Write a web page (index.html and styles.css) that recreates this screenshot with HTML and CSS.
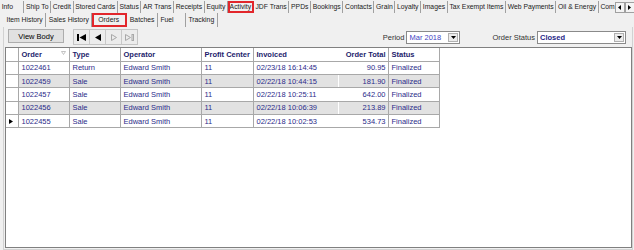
FILE: index.html
```html
<!DOCTYPE html>
<html lang="en">
<head>
  <meta charset="UTF-8" />
  <title>Customer Activity - Orders</title>
  <link rel="stylesheet" href="styles.css">
</head>
<body>
  <div class="tabs tabs-main">
    <div class="tab-list">
      <span class="tab tab-info">Info</span>
      <span class="tab">Ship To</span>
      <span class="tab">Credit</span>
      <span class="tab">Stored Cards</span>
      <span class="tab">Status</span>
      <span class="tab">AR Trans</span>
      <span class="tab">Receipts</span>
      <span class="tab">Equity</span>
      <span class="tab tab-marked">Activity</span>
      <span class="tab">JDF Trans</span>
      <span class="tab">PPDs</span>
      <span class="tab">Bookings</span>
      <span class="tab">Contacts</span>
      <span class="tab">Grain</span>
      <span class="tab">Loyalty</span>
      <span class="tab">Images</span>
      <span class="tab">Tax Exempt Items</span>
      <span class="tab">Web Payments</span>
      <span class="tab">Oil &amp; Energy</span>
      <span class="tab tab-last">Com</span>
    </div>
    <div class="tab-scroll">
      <span class="scroll-btn"><svg width="3" height="5" viewBox="0 0 3 5"><path d="M3 0 L0 2.5 L3 5Z" fill="#000"/></svg></span>
      <span class="scroll-btn"><svg width="3" height="5" viewBox="0 0 3 5"><path d="M0 0 L3 2.5 L0 5Z" fill="#000"/></svg></span>
    </div>
  </div>

  <div class="tabs tabs-sub">
    <span class="tab">Item History</span>
    <span class="tab">Sales History</span>
    <span class="tab tab-marked">Orders</span>
    <span class="tab">Batches</span>
    <span class="tab">Fuel</span>
    <span class="tab">Tracking</span>
  </div>

  <div class="page">
    <div class="toolbar">
      <button class="btn">View Body</button>

      <div class="nav">
        <span class="nav-btn">
          <svg width="9" height="7" viewBox="0 0 9 7"><rect x="0" y="0" width="2" height="7" fill="#000"/><path d="M9 0 L2.5 3.5 L9 7Z" fill="#000"/></svg>
        </span>
        <span class="nav-btn">
          <svg width="6" height="7" viewBox="0 0 6 7"><path d="M6 0 L0 3.5 L6 7Z" fill="#000"/></svg>
        </span>
        <span class="nav-btn">
          <svg width="6" height="7" viewBox="0 0 6 7"><path d="M0.5 0.5 L5.5 3.5 L0.5 6.5Z" fill="none" stroke="#a8a8a8"/></svg>
        </span>
        <span class="nav-btn">
          <svg width="9" height="7" viewBox="0 0 9 7"><path d="M0.5 0.5 L5.5 3.5 L0.5 6.5Z" fill="none" stroke="#a8a8a8"/><rect x="7" y="0.5" width="1.5" height="6" fill="none" stroke="#a8a8a8"/></svg>
        </span>
      </div>

      <div class="filters">
        <label class="filter-label">Period</label>
        <div class="combo combo-period">
          <span class="combo-value">Mar 2018</span>
          <span class="combo-arrow"><svg width="5" height="3" viewBox="0 0 5 3"><path d="M0 0 L5 0 L2.5 3Z" fill="#000"/></svg></span>
        </div>
        <label class="filter-label filter-status">Order Status</label>
        <div class="combo combo-status">
          <span class="combo-value combo-bold">Closed</span>
          <span class="combo-arrow"><svg width="5" height="3" viewBox="0 0 5 3"><path d="M0 0 L5 0 L2.5 3Z" fill="#000"/></svg></span>
        </div>
      </div>
    </div>

    <div class="grid-area">
      <table class="grid">
        <colgroup>
          <col class="c-rowhead">
          <col class="c-order">
          <col class="c-type">
          <col class="c-operator">
          <col class="c-profit">
          <col class="c-invoiced">
          <col class="c-total">
          <col class="c-status">
        </colgroup>
        <thead>
          <tr>
            <th class="rowhead"></th>
            <th class="sortable">Order
              <svg class="sort-glyph" width="5" height="4" viewBox="0 0 5 4"><path d="M0.5 0.5 L4.5 0.5 L2.5 3.5Z" fill="none" stroke="#b4b4b4" stroke-width="0.8"/></svg>
            </th>
            <th>Type</th>
            <th>Operator</th>
            <th>Profit Center</th>
            <th class="no-split">Invoiced</th>
            <th class="num">Order Total</th>
            <th>Status</th>
          </tr>
        </thead>
        <tbody>
          <tr>
            <td class="rowhead"></td>
            <td>1022461</td><td>Return</td><td>Edward Smith</td><td>11</td>
            <td class="no-split">02/23/18 16:14:45</td><td class="num">90.95</td><td>Finalized</td>
          </tr>
          <tr class="alt">
            <td class="rowhead"></td>
            <td>1022459</td><td>Sale</td><td>Edward Smith</td><td>11</td>
            <td class="no-split">02/22/18 10:44:15</td><td class="num">181.90</td><td>Finalized</td>
          </tr>
          <tr>
            <td class="rowhead"></td>
            <td>1022457</td><td>Sale</td><td>Edward Smith</td><td>11</td>
            <td class="no-split">02/22/18 10:25:11</td><td class="num">642.00</td><td>Finalized</td>
          </tr>
          <tr class="alt">
            <td class="rowhead"></td>
            <td>1022456</td><td>Sale</td><td>Edward Smith</td><td>11</td>
            <td class="no-split">02/22/18 10:06:39</td><td class="num">213.89</td><td>Finalized</td>
          </tr>
          <tr>
            <td class="rowhead"><svg width="4" height="5" viewBox="0 0 4 5"><path d="M0 0 L4 2.5 L0 5Z" fill="#000"/></svg></td>
            <td>1022455</td><td>Sale</td><td>Edward Smith</td><td>11</td>
            <td class="no-split">02/22/18 10:02:53</td><td class="num">534.73</td><td>Finalized</td>
          </tr>
        </tbody>
      </table>
    </div>
  </div>
</body>
</html>
```

FILE: styles.css
```css
body {
  margin: 0;
  width: 634px;
  height: 250px;
  overflow: hidden;
  background-color: #f0f0f0;
  font-family: "Liberation Sans", Arial, sans-serif;
  color: #000;
}

/* tab strips */
.tabs {
  display: flex;
  font-size: 6.8px;
}

.tabs-main {
  height: 13px;
  padding-top: 1px;
  box-sizing: border-box;
}

.tab-list {
  display: flex;
  flex: 1;
}

.tab {
  padding: 0 1.65px;
  border-right: 1px solid #a0a0a0;
  line-height: 12px;
  white-space: nowrap;
  color: #1a1a1a;
}

.tab-info {
  min-width: 20px;
}

.tab-last {
  padding-right: 0;
  border-right: none;
}

.tab-marked {
  outline: 2px solid #e2262b;
  outline-offset: -2px;
}

.tab-scroll {
  display: flex;
  padding-top: 1px;
}

.scroll-btn {
  width: 8px;
  height: 9px;
  border: 1px solid #a0a0a0;
  background-color: #f4f4f4;
  display: flex;
  align-items: center;
  justify-content: center;
}

.tabs-sub {
  height: 14px;
  padding-left: 4px;
}

.tabs-sub .tab {
  padding: 0 2.5px;
  min-width: 22px;
  line-height: 14px;
}

.tabs-sub .tab-marked {
  padding: 0 6px;
}

/* tab page */
.page {
  margin: 0 1px 0 3px;
  height: 222px;
  border: 1px solid #d2d2d2;
  border-top: none;
  display: flex;
  flex-direction: column;
}

.toolbar {
  height: 20px;
  display: flex;
  align-items: flex-start;
  padding: 2px 6px 0 4px;
  box-sizing: border-box;
  font-size: 7.5px;
}

.btn {
  width: 56px;
  height: 14px;
  padding: 0;
  border: 1px solid #adadad;
  background-color: #e1e1e1;
  font-family: inherit;
  font-size: 7.5px;
  color: #000;
}

.nav {
  display: flex;
  margin-left: 9px;
  height: 14px;
  border: 1px solid #c4c4c4;
  background-color: #ececec;
}

.nav-btn {
  width: 15px;
  display: flex;
  align-items: center;
  justify-content: center;
  border-right: 1px solid #c8c8c8;
}

.nav-btn:last-child {
  border-right: none;
}

.filters {
  margin-left: auto;
  display: flex;
  align-items: center;
  margin-top: 2px;
  height: 13px;
}

.filter-label {
  color: #333;
  margin-right: 2px;
}

.filter-status {
  margin-left: 32px;
}

.combo {
  height: 13px;
  box-sizing: border-box;
  border: 1px solid #8a8a8a;
  background-color: #fff;
  display: flex;
  align-items: center;
}

.combo-period {
  width: 54px;
}

.combo-status {
  width: 89px;
}

.combo-value {
  flex: 1;
  padding-left: 2px;
  color: #4343c4;
}

.combo-bold {
  font-weight: bold;
  color: #1e1e86;
}

.combo-arrow {
  width: 10px;
  height: 9px;
  margin-right: 1px;
  border: 1px solid #b0b0b0;
  background-color: #ececec;
  display: flex;
  align-items: center;
  justify-content: center;
  box-sizing: border-box;
}

/* data grid */
.grid-area {
  flex: 1;
  margin: 0 0 1px 1px;
  border: 1px solid #808080;
  background-color: #fff;
}

.grid {
  border-collapse: collapse;
  table-layout: fixed;
  width: 433px;
  font-size: 7.5px;
  color: #2b2b8a;
}

.c-rowhead { width: 12px; }
.c-order { width: 51px; }
.c-type { width: 51px; }
.c-operator { width: 81px; }
.c-profit { width: 52px; }
.c-invoiced { width: 85px; }
.c-total { width: 50px; }
.c-status { width: 51px; }

.grid th,
.grid td {
  height: 13.4px;
  padding: 0 0 0 3px;
  border-right: 1px solid #a8a8a8;
  border-bottom: 1px solid #a8a8a8;
  text-align: left;
  white-space: nowrap;
  overflow: hidden;
  box-sizing: border-box;
}

.grid th {
  height: 13px;
  font-weight: bold;
  color: #1c1c6c;
  background-color: #fff;
}

.grid .no-split {
  border-right-color: transparent;
}

.grid .num {
  text-align: right;
  padding: 0 2px 0 0;
}

.grid .rowhead {
  padding: 0 0 0 3px;
  background-color: #fff;
}

.grid tr.alt td {
  background-color: #e2e2e2;
}

.grid tr.alt td.rowhead {
  background-color: #fff;
}

.sortable {
  position: relative;
}

.sort-glyph {
  position: absolute;
  right: 3px;
  top: 3px;
}
```
